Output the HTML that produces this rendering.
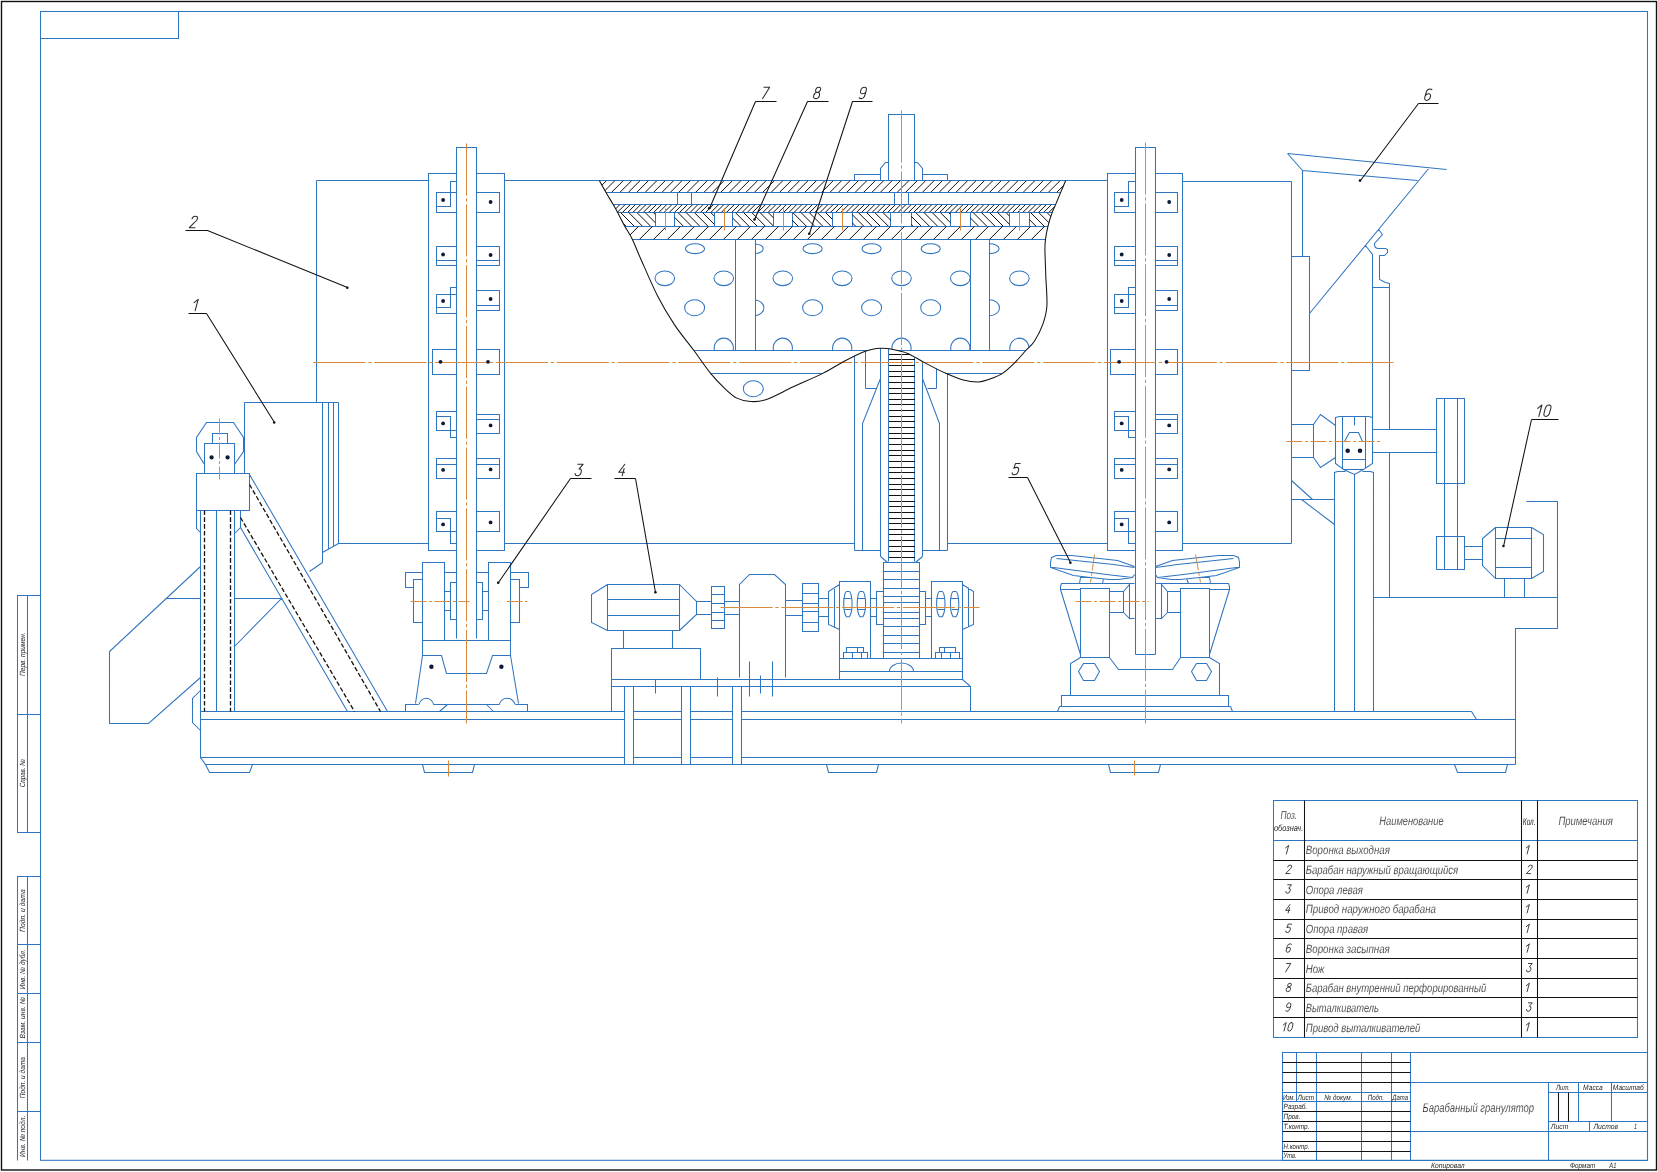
<!DOCTYPE html>
<html lang="ru"><head><meta charset="utf-8"><title>Барабанный гранулятор</title>
<style>html,body{margin:0;padding:0;background:#fff}svg{display:block}</style></head>
<body>
<svg width="1658" height="1172" viewBox="0 0 1658 1172">
<defs>
<clipPath id="cut"><path d="M599.3 180.5C600.4 182.5 603.7 188.4 606.0 192.4C608.3 196.4 611.3 201.3 613.2 204.6C615.1 207.9 615.7 208.8 617.6 212.4C619.5 216.0 622.3 221.7 624.8 226.2C627.3 230.7 629.8 234.0 632.4 239.4C635.0 244.8 636.5 249.4 640.7 258.8C644.9 268.2 652.0 285.0 657.6 296.0C663.2 307.0 668.4 315.5 674.4 324.6C680.4 333.7 687.8 342.3 693.9 350.5C700.0 358.7 705.6 367.2 710.8 373.6C716.0 380.0 720.8 384.7 725.1 388.8C729.5 392.9 732.7 396.0 736.9 398.1C741.1 400.2 745.6 401.2 750.4 401.5C755.2 401.8 758.5 402.2 765.6 399.8C772.7 397.4 783.3 391.5 792.7 387.1C802.1 382.7 813.8 377.8 822.2 373.6C830.6 369.4 836.7 365.3 843.3 361.8C849.9 358.3 856.9 354.6 862.0 352.5C867.1 350.4 870.6 349.6 873.8 348.9C877.0 348.2 878.2 348.3 881.0 348.3C883.8 348.3 886.3 348.2 890.7 349.1C895.1 350.0 902.0 351.1 907.6 353.4C913.2 355.6 917.9 359.2 924.4 362.6C930.9 366.0 939.9 370.7 946.4 373.6C952.9 376.5 957.9 378.6 963.3 380.0C968.6 381.4 974.3 382.1 978.5 382.0C982.7 381.9 984.7 380.9 988.6 379.5C992.5 378.1 997.6 376.6 1002.1 373.6C1006.6 370.7 1011.7 365.7 1015.6 361.8C1019.5 357.9 1022.7 353.9 1025.8 350.5C1028.9 347.1 1031.4 345.8 1034.2 341.5C1037.0 337.2 1040.6 330.5 1042.7 324.6C1044.8 318.7 1046.4 314.1 1046.9 306.0C1047.4 297.9 1046.1 285.0 1045.8 275.7C1045.5 266.4 1045.0 256.1 1044.9 250.0C1044.9 243.9 1045.0 243.4 1045.5 239.4C1046.0 235.4 1046.9 230.7 1048.0 226.2C1049.1 221.7 1050.9 216.0 1052.2 212.4C1053.5 208.8 1054.2 207.9 1055.6 204.6C1057.0 201.3 1059.0 196.4 1060.7 192.4C1062.4 188.4 1064.9 182.5 1065.7 180.5Z"/></clipPath>
<clipPath id="below"><path d="M590 800L590 170L599.3 180.5C600.4 182.5 603.7 188.4 606.0 192.4C608.3 196.4 611.3 201.3 613.2 204.6C615.1 207.9 615.7 208.8 617.6 212.4C619.5 216.0 622.3 221.7 624.8 226.2C627.3 230.7 629.8 234.0 632.4 239.4C635.0 244.8 636.5 249.4 640.7 258.8C644.9 268.2 652.0 285.0 657.6 296.0C663.2 307.0 668.4 315.5 674.4 324.6C680.4 333.7 687.8 342.3 693.9 350.5C700.0 358.7 705.6 367.2 710.8 373.6C716.0 380.0 720.8 384.7 725.1 388.8C729.5 392.9 732.7 396.0 736.9 398.1C741.1 400.2 745.6 401.2 750.4 401.5C755.2 401.8 758.5 402.2 765.6 399.8C772.7 397.4 783.3 391.5 792.7 387.1C802.1 382.7 813.8 377.8 822.2 373.6C830.6 369.4 836.7 365.3 843.3 361.8C849.9 358.3 856.9 354.6 862.0 352.5C867.1 350.4 870.6 349.6 873.8 348.9C877.0 348.2 878.2 348.3 881.0 348.3C883.8 348.3 886.3 348.2 890.7 349.1C895.1 350.0 902.0 351.1 907.6 353.4C913.2 355.6 917.9 359.2 924.4 362.6C930.9 366.0 939.9 370.7 946.4 373.6C952.9 376.5 957.9 378.6 963.3 380.0C968.6 381.4 974.3 382.1 978.5 382.0C982.7 381.9 984.7 380.9 988.6 379.5C992.5 378.1 997.6 376.6 1002.1 373.6C1006.6 370.7 1011.7 365.7 1015.6 361.8C1019.5 357.9 1022.7 353.9 1025.8 350.5C1028.9 347.1 1031.4 345.8 1034.2 341.5C1037.0 337.2 1040.6 330.5 1042.7 324.6C1044.8 318.7 1046.4 314.1 1046.9 306.0C1047.4 297.9 1046.1 285.0 1045.8 275.7C1045.5 266.4 1045.0 256.1 1044.9 250.0C1044.9 243.9 1045.0 243.4 1045.5 239.4C1046.0 235.4 1046.9 230.7 1048.0 226.2C1049.1 221.7 1050.9 216.0 1052.2 212.4C1053.5 208.8 1054.2 207.9 1055.6 204.6C1057.0 201.3 1059.0 196.4 1060.7 192.4C1062.4 188.4 1064.9 182.5 1065.7 180.5L1080 170L1080 800Z"/></clipPath>
<clipPath id="ly0"><rect x="590" y="180.5" width="490" height="11.9"/></clipPath>
<clipPath id="ly1"><rect x="590" y="192.4" width="490" height="12.2"/></clipPath>
<clipPath id="ly2"><rect x="590" y="204.6" width="490" height="7.8"/></clipPath>
<clipPath id="ly3"><rect x="590" y="212.4" width="490" height="13.8"/></clipPath>
<clipPath id="ly4"><rect x="590" y="226.2" width="490" height="13.3"/></clipPath>
<clipPath id="l4g"><path d="M590.0 212.4H655.2V226.2H590.0ZM674.6 212.4H714.3V226.2H674.6ZM732.8 212.4H773.4V226.2H732.8ZM792.0 212.4H832.4V226.2H792.0ZM852.1 212.4H890.9V226.2H852.1ZM911.2 212.4H950.4V226.2H911.2ZM970.0 212.4H1009.5V226.2H970.0ZM1029.4 212.4H1080.0V226.2H1029.4Z"/></clipPath>
</defs>
<rect width="1658" height="1172" fill="#fff"/>
<rect x="1.5" y="1.5" width="1655" height="1168.5" fill="none" stroke="#111" stroke-width="1.4"/>
<g fill="none" stroke="#3075c0" stroke-width="1.05">
<rect x="40.5" y="11.5" width="1607" height="1148.8"/>
<path d="M40.5 38.5L178.5 38.5L178.5 11.5M316.5 180.5L316.5 402.5M316.5 180.5L428.5 180.5M504.5 180.5L1107.5 180.5M1182.5 181.5L1291.5 181.5M1291.5 181.5L1291.5 543.5M338.5 543.5L428.5 543.5M504.5 543.5L854.5 543.5M947.5 543.5L1107.5 543.5M1182.5 543.5L1291.5 543.5M456.5 173.5L428.5 173.5L428.5 550.5L456.5 550.5M476.5 173.5L504.5 173.5L504.5 550.5L476.5 550.5M456.5 638.5L456.5 147.5L476.5 147.5L476.5 638.5M436.5 192.5L456.5 192.5L456.5 212.5L436.5 212.5ZM476.5 192.5L499.5 192.5L499.5 212.5L476.5 212.5ZM436.5 206.5L450.5 206.5L450.5 181.5L456.5 181.5M436.5 246.5L456.5 246.5L456.5 265.5L436.5 265.5ZM476.5 246.5L499.5 246.5L499.5 265.5L476.5 265.5ZM436.5 260.5L456.5 260.5M476.5 260.5L499.5 260.5M436.5 294.5L456.5 294.5L456.5 313.5L436.5 313.5ZM476.5 290.5L499.5 290.5L499.5 310.5L476.5 310.5ZM436.5 307.5L450.5 307.5L450.5 287.5L456.5 287.5M476.5 305.5L499.5 305.5M436.5 531.5L456.5 531.5L456.5 511.5L436.5 511.5ZM476.5 531.5L499.5 531.5L499.5 511.5L476.5 511.5ZM436.5 518.5L450.5 518.5L450.5 543.5L456.5 543.5M436.5 478.5L456.5 478.5L456.5 458.5L436.5 458.5ZM476.5 478.5L499.5 478.5L499.5 458.5L476.5 458.5ZM436.5 464.5L456.5 464.5M476.5 464.5L499.5 464.5M436.5 430.5L456.5 430.5L456.5 411.5L436.5 411.5ZM476.5 433.5L499.5 433.5L499.5 414.5L476.5 414.5ZM436.5 416.5L450.5 416.5L450.5 437.5L456.5 437.5M476.5 419.5L499.5 419.5M432.5 349.5L456.5 349.5L456.5 374.5L432.5 374.5ZM476.5 349.5L499.5 349.5L499.5 374.5L476.5 374.5ZM1135.5 173.5L1107.5 173.5L1107.5 550.5L1135.5 550.5M1155.5 173.5L1182.5 173.5L1182.5 550.5L1155.5 550.5M1135.5 654.5L1135.5 147.5L1155.5 147.5L1155.5 654.5M1114.5 192.5L1135.5 192.5L1135.5 212.5L1114.5 212.5ZM1155.5 192.5L1177.5 192.5L1177.5 212.5L1155.5 212.5ZM1114.5 206.5L1128.5 206.5L1128.5 181.5L1135.5 181.5M1114.5 246.5L1135.5 246.5L1135.5 265.5L1114.5 265.5ZM1155.5 246.5L1177.5 246.5L1177.5 265.5L1155.5 265.5ZM1114.5 260.5L1135.5 260.5M1155.5 260.5L1177.5 260.5M1114.5 294.5L1135.5 294.5L1135.5 313.5L1114.5 313.5ZM1155.5 290.5L1177.5 290.5L1177.5 310.5L1155.5 310.5ZM1114.5 307.5L1128.5 307.5L1128.5 287.5L1135.5 287.5M1155.5 305.5L1177.5 305.5M1114.5 531.5L1135.5 531.5L1135.5 511.5L1114.5 511.5ZM1155.5 531.5L1177.5 531.5L1177.5 511.5L1155.5 511.5ZM1114.5 518.5L1128.5 518.5L1128.5 543.5L1135.5 543.5M1114.5 478.5L1135.5 478.5L1135.5 458.5L1114.5 458.5ZM1155.5 478.5L1177.5 478.5L1177.5 458.5L1155.5 458.5ZM1114.5 464.5L1135.5 464.5M1155.5 464.5L1177.5 464.5M1114.5 430.5L1135.5 430.5L1135.5 411.5L1114.5 411.5ZM1155.5 433.5L1177.5 433.5L1177.5 414.5L1155.5 414.5ZM1114.5 416.5L1128.5 416.5L1128.5 437.5L1135.5 437.5M1155.5 419.5L1177.5 419.5M1110.5 349.5L1135.5 349.5L1135.5 374.5L1110.5 374.5ZM1155.5 349.5L1177.5 349.5L1177.5 374.5L1155.5 374.5ZM888.5 180.5L888.5 114.5L914.5 114.5L914.5 180.5M880.5 180.5L880.5 168.5L885.5 162.5L888.5 162.5M922.5 180.5L922.5 168.5L917.5 162.5L914.5 162.5M854.5 180.5L854.5 174.5L880.5 174.5M947.5 180.5L947.5 174.5L922.5 174.5M854.5 550.5L880.5 550.5M922.5 550.5L947.5 550.5M880.5 556.5L887.5 562.5M922.5 556.5L915.5 562.5M883.5 562.5L919.5 562.5L919.5 658.5L883.5 658.5ZM883.5 571.5L919.5 571.5M883.5 579.5L919.5 579.5M883.5 588.5L919.5 588.5M883.5 596.5L919.5 596.5M883.5 602.5L919.5 602.5M883.5 612.5L919.5 612.5M883.5 618.5L919.5 618.5M883.5 626.5L919.5 626.5M883.5 635.5L919.5 635.5M883.5 643.5L919.5 643.5M883.5 652.5L919.5 652.5M607.5 584.5L679.5 584.5L679.5 630.5L607.5 630.5ZM607.5 599.5L679.5 599.5M607.5 615.5L679.5 615.5M607.5 584.5L591.5 594.5L591.5 622.5L607.5 630.5M679.5 584.5L696.5 601.5L696.5 614.5L679.5 630.5M696.5 601.5L711.5 601.5M696.5 614.5L711.5 614.5M711.5 586.5L724.5 586.5L724.5 628.5L711.5 628.5ZM711.5 594.5L724.5 594.5M711.5 603.5L724.5 603.5M711.5 612.5L724.5 612.5M711.5 620.5L724.5 620.5M724.5 601.5L739.5 601.5M724.5 614.5L739.5 614.5M739.5 677.5L739.5 584.5L749.5 574.5L774.5 574.5L785.5 584.5L785.5 677.5M785.5 600.5L802.5 600.5M785.5 615.5L802.5 615.5M802.5 583.5L818.5 583.5L818.5 631.5L802.5 631.5ZM802.5 593.5L818.5 593.5M802.5 603.5L818.5 603.5M802.5 611.5L818.5 611.5M802.5 622.5L818.5 622.5M818.5 598.5L828.5 598.5M818.5 616.5L828.5 616.5M839.5 584.5L828.5 591.5L828.5 624.5L839.5 629.5M834.5 587.5L834.5 627.5M839.5 581.5L870.5 581.5L870.5 658.5L839.5 658.5ZM931.5 581.5L962.5 581.5L962.5 658.5L931.5 658.5ZM843.5 598.5L851.5 598.5M844.5 609.5L851.5 609.5M857.5 598.5L865.5 598.5M857.5 609.5L865.5 609.5M936.5 598.5L944.5 598.5M937.5 609.5L944.5 609.5M950.5 598.5L958.5 598.5M951.5 609.5L958.5 609.5M870.5 598.5L876.5 598.5M870.5 616.5L876.5 616.5M876.5 591.5L883.5 591.5L883.5 624.5L876.5 624.5ZM919.5 591.5L925.5 591.5L925.5 624.5L919.5 624.5ZM925.5 598.5L931.5 598.5M925.5 616.5L931.5 616.5M962.5 584.5L973.5 591.5L973.5 624.5L962.5 629.5M968.5 587.5L968.5 627.5M843.5 652.5L867.5 652.5L867.5 658.5L843.5 658.5ZM852.5 652.5L852.5 658.5M861.5 652.5L861.5 658.5M846.5 652.5L846.5 647.5L863.5 647.5L863.5 652.5M857.5 647.5L857.5 652.5M935.5 652.5L959.5 652.5L959.5 658.5L935.5 658.5ZM941.5 652.5L941.5 658.5M950.5 652.5L950.5 658.5M939.5 652.5L939.5 647.5L955.5 647.5L955.5 652.5M944.5 647.5L944.5 652.5M839.5 658.5L839.5 679.5M839.5 671.5L962.5 671.5M870.5 658.5L931.5 658.5M962.5 658.5L962.5 679.5L970.5 686.5L970.5 711.5M623.5 630.5L672.5 630.5L672.5 648.5L623.5 648.5ZM611.5 711.5L611.5 648.5L700.5 648.5L700.5 679.5M611.5 679.5L962.5 679.5M611.5 686.5L970.5 686.5M624.5 686.5L624.5 764.5M633.5 686.5L633.5 764.5M681.5 686.5L681.5 764.5M690.5 686.5L690.5 764.5M732.5 686.5L732.5 764.5M741.5 686.5L741.5 764.5M655.5 679.5L655.5 693.5M717.5 677.5L717.5 696.5M749.5 661.5L749.5 696.5M760.5 675.5L760.5 693.5M772.5 661.5L772.5 696.5M200.5 711.5L624.5 711.5M633.5 711.5L681.5 711.5M690.5 711.5L732.5 711.5M741.5 711.5L1471.5 711.5M200.5 719.5L624.5 719.5M633.5 719.5L681.5 719.5M690.5 719.5L732.5 719.5M741.5 719.5L1515.5 719.5M200.5 757.5L624.5 757.5M633.5 757.5L681.5 757.5M690.5 757.5L732.5 757.5M741.5 757.5L1515.5 757.5M205.5 764.5L1515.5 764.5M200.5 711.5L200.5 757.5L205.5 764.5M1471.5 711.5L1476.5 719.5M205.5 764.5L209.5 772.5L249.5 772.5L252.5 764.5M422.5 764.5L424.5 772.5L472.5 772.5L474.5 764.5M826.5 764.5L828.5 772.5L876.5 772.5L878.5 764.5M1108.5 764.5L1110.5 772.5L1158.5 772.5L1160.5 764.5M1454.5 764.5L1457.5 772.5L1505.5 772.5L1507.5 764.5M200.5 510.5L200.5 711.5M216.5 510.5L216.5 711.5M234.5 510.5L234.5 711.5M196.5 473.5L249.5 473.5L249.5 510.5L196.5 510.5ZM196.5 510.5L196.5 528.5L200.5 532.5M240.5 510.5L240.5 527.5L234.5 533.5M204.5 464.5L196.5 451.5L196.5 437.5L206.5 422.5L233.5 422.5L243.5 437.5L243.5 451.5L234.5 464.5M204.5 473.5L204.5 443.5L234.5 443.5L234.5 473.5M212.5 443.5L212.5 433.5L227.5 433.5L227.5 443.5M200.5 566.5L109.5 651.5L109.5 723.5L148.5 723.5L200.5 677.5M165.5 598.5L200.5 598.5M200.5 690.5L192.5 698.5L192.5 722.5L200.5 730.5M234.5 598.5L281.5 598.5L234.5 646.5M249.5 474.5L387.5 711.5M240.5 527.5L347.5 711.5M244.5 402.5L338.5 402.5M244.5 402.5L244.5 473.5M322.5 402.5L322.5 562.5M328.5 402.5L328.5 549.5M333.5 402.5L333.5 546.5M338.5 402.5L338.5 543.5M322.5 552.5L338.5 543.5M322.5 562.5L309.5 571.5M422.5 562.5L444.5 562.5L444.5 640.5L422.5 640.5ZM488.5 562.5L510.5 562.5L510.5 640.5L488.5 640.5ZM444.5 640.5L488.5 640.5M422.5 572.5L405.5 572.5L405.5 587.5L413.5 587.5M422.5 579.5L413.5 579.5L413.5 622.5L422.5 622.5M510.5 572.5L528.5 572.5L528.5 587.5L519.5 587.5M510.5 579.5L519.5 579.5L519.5 622.5L510.5 622.5M444.5 572.5L456.5 572.5M476.5 572.5L488.5 572.5M456.5 582.5L450.5 582.5L450.5 619.5L456.5 619.5M476.5 582.5L482.5 582.5L482.5 619.5L476.5 619.5M444.5 591.5L450.5 591.5M444.5 610.5L450.5 610.5M482.5 591.5L488.5 591.5M482.5 610.5L488.5 610.5M422.5 640.5L422.5 655.5L441.5 655.5L446.5 673.5L486.5 673.5L492.5 655.5L510.5 655.5L510.5 640.5M422.5 655.5L415.5 703.5M510.5 655.5L518.5 703.5M405.5 711.5L405.5 704.5L418.5 704.5M433.5 704.5L499.5 704.5M515.5 704.5L527.5 704.5L527.5 711.5M447.5 704.5L439.5 711.5M486.5 704.5L493.5 711.5M1134.5 566.5L1117.5 560.5L1099.5 558.5L1071.5 555.5L1056.5 555.5L1051.5 557.5L1050.5 562.5L1050.5 567.5L1073.5 575.5L1090.5 577.5L1109.5 579.5L1118.5 579.5L1132.5 577.5L1134.5 574.5M1155.5 566.5L1172.5 560.5L1190.5 558.5L1218.5 555.5L1233.5 555.5L1238.5 557.5L1239.5 562.5L1239.5 567.5L1216.5 575.5L1199.5 577.5L1180.5 579.5L1171.5 579.5L1157.5 577.5L1155.5 574.5M1056.5 558.5L1113.5 564.5L1134.5 567.5M1233.5 558.5L1177.5 564.5L1155.5 567.5M1051.5 567.5L1053.5 567.5L1106.5 574.5L1132.5 577.5M1239.5 567.5L1236.5 567.5L1183.5 574.5L1157.5 577.5M1079.5 583.5L1080.5 577.5L1089.5 577.5M1210.5 583.5L1209.5 577.5L1201.5 577.5M1102.5 583.5L1103.5 578.5M1188.5 583.5L1186.5 578.5M1134.5 583.5L1061.5 583.5L1060.5 586.5L1060.5 589.5L1080.5 589.5M1155.5 583.5L1228.5 583.5L1229.5 586.5L1229.5 589.5L1209.5 589.5M1060.5 589.5L1080.5 654.5M1229.5 589.5L1209.5 654.5M1080.5 588.5L1109.5 588.5L1109.5 657.5L1080.5 657.5ZM1209.5 588.5L1180.5 588.5L1180.5 657.5L1209.5 657.5ZM1109.5 591.5L1123.5 591.5L1123.5 612.5L1109.5 612.5M1180.5 591.5L1167.5 591.5L1167.5 612.5L1180.5 612.5M1123.5 591.5L1129.5 584.5L1129.5 618.5L1123.5 612.5M1167.5 591.5L1161.5 584.5L1161.5 618.5L1167.5 612.5M1129.5 618.5L1134.5 618.5M1161.5 618.5L1155.5 618.5M1135.5 654.5L1155.5 654.5M1080.5 657.5L1070.5 663.5L1070.5 695.5M1209.5 657.5L1219.5 663.5L1219.5 695.5M1109.5 657.5L1118.5 669.5L1172.5 669.5L1180.5 657.5M1099.5 671.5L1094.5 680.5L1083.5 680.5L1078.5 671.5L1083.5 663.5L1094.5 663.5ZM1211.5 671.5L1206.5 680.5L1196.5 680.5L1191.5 671.5L1196.5 663.5L1206.5 663.5ZM1061.5 695.5L1228.5 695.5L1228.5 706.5L1061.5 706.5ZM1059.5 706.5L1057.5 711.5M1230.5 706.5L1232.5 711.5M1059.5 706.5L1230.5 706.5M1287.5 153.5L1446.5 169.5M1287.5 153.5L1302.5 170.5M1302.5 170.5L1417.5 180.5M1302.5 170.5L1302.5 256.5M1429.5 167.5L1309.5 313.5M1291.5 256.5L1309.5 256.5L1309.5 370.5L1291.5 370.5ZM1378.5 229.5L1382.5 234.5L1374.5 243.5L1374.5 245.5L1375.5 247.5L1377.5 248.5L1385.5 248.5L1387.5 249.5L1387.5 252.5L1384.5 255.5L1379.5 255.5L1379.5 279.5L1385.5 282.5L1389.5 283.5L1389.5 429.5M1365.5 245.5L1372.5 254.5L1372.5 417.5M1372.5 287.5L1389.5 287.5M1389.5 452.5L1389.5 597.5M1291.5 424.5L1313.5 424.5L1313.5 457.5L1291.5 457.5M1313.5 424.5L1320.5 414.5L1335.5 425.5M1313.5 457.5L1320.5 467.5L1335.5 457.5M1335.5 417.5L1339.5 416.5L1368.5 416.5L1372.5 417.5L1372.5 463.5L1363.5 469.5L1343.5 469.5L1335.5 463.5ZM1342.5 416.5L1342.5 468.5M1365.5 416.5L1365.5 468.5M1354.5 416.5L1354.5 425.5M1342.5 459.5L1365.5 459.5M1344.5 441.5L1349.5 432.5L1358.5 432.5L1362.5 441.5M1343.5 469.5L1354.5 474.5L1363.5 469.5M1334.5 711.5L1334.5 472.5L1337.5 471.5L1345.5 471.5M1373.5 711.5L1373.5 472.5L1370.5 471.5L1362.5 471.5M1354.5 474.5L1354.5 711.5M1372.5 429.5L1436.5 429.5M1372.5 452.5L1436.5 452.5M1436.5 398.5L1464.5 398.5L1464.5 483.5L1436.5 483.5ZM1436.5 536.5L1464.5 536.5L1464.5 569.5L1436.5 569.5ZM1444.5 398.5L1444.5 569.5M1457.5 398.5L1457.5 569.5M1464.5 546.5L1482.5 546.5M1464.5 559.5L1482.5 559.5M1495.5 527.5L1482.5 538.5L1482.5 565.5L1495.5 578.5M1495.5 527.5L1531.5 527.5L1531.5 578.5L1495.5 578.5ZM1495.5 538.5L1531.5 538.5M1495.5 567.5L1531.5 567.5M1531.5 527.5L1543.5 534.5L1543.5 571.5L1531.5 578.5M1504.5 578.5L1504.5 597.5M1524.5 578.5L1524.5 597.5M1373.5 597.5L1557.5 597.5M1526.5 501.5L1557.5 501.5L1557.5 628.5L1515.5 628.5L1515.5 764.5M1291.5 499.5L1334.5 499.5M1291.5 480.5L1312.5 499.5M1301.5 499.5L1334.5 524.5"/>
<path d="M40.5 595.5L17.5 595.5L17.5 832.5L40.5 832.5M27.5 595.5L27.5 832.5M17.5 714.5L40.5 714.5M40.5 876.5L17.5 876.5L17.5 1160.5M27.5 876.5L27.5 1160.5M17.5 944.5L40.5 944.5M17.5 993.5L40.5 993.5M17.5 1042.5L40.5 1042.5M17.5 1111.5L40.5 1111.5"/>
<path d="M1273.5 800.5L1637.5 800.5L1637.5 1037.5L1273.5 1037.5ZM1273.5 840.5L1637.5 840.5M1282.5 1052.5L1647.5 1052.5L1647.5 1160.5L1282.5 1160.5ZM1316.5 1052.5L1316.5 1160.5M1361.5 1052.5L1361.5 1160.5M1391.5 1052.5L1391.5 1160.5M1410.5 1052.5L1410.5 1160.5M1296.5 1052.5L1296.5 1101.5M1282.5 1092.5L1410.5 1092.5M1282.5 1101.5L1410.5 1101.5M1410.5 1082.5L1647.5 1082.5M1410.5 1131.5L1647.5 1131.5M1548.5 1082.5L1548.5 1160.5M1548.5 1092.5L1647.5 1092.5M1548.5 1121.5L1647.5 1121.5M1578.5 1082.5L1578.5 1121.5M1611.5 1082.5L1611.5 1121.5M1589.5 1121.5L1589.5 1131.5"/>
<path d="M846.7 591.5C844.9 591.5 843.7 598.3 843.7 604.3C843.7 610.3 844.9 614.4 846.4 616.8L849.4 616.8C850.9 614.4 852.1 610.3 852.1 604.3C852.1 598.3 850.9 591.5 849.1 591.5Z"/><path d="M860.2 591.5C858.4 591.5 857.2 598.3 857.2 604.3C857.2 610.3 858.4 614.4 859.9 616.8L862.9 616.8C864.4 614.4 865.6 610.3 865.6 604.3C865.6 598.3 864.4 591.5 862.6 591.5Z"/><path d="M939.6 591.5C937.8 591.5 936.6 598.3 936.6 604.3C936.6 610.3 937.8 614.4 939.3 616.8L942.3 616.8C943.8 614.4 945.0 610.3 945.0 604.3C945.0 598.3 943.8 591.5 942.0 591.5Z"/><path d="M953.4 591.5C951.6 591.5 950.4 598.3 950.4 604.3C950.4 610.3 951.6 614.4 953.1 616.8L956.1 616.8C957.6 614.4 958.8 610.3 958.8 604.3C958.8 598.3 957.6 591.5 955.8 591.5Z"/><path d="M889.4 671.5A12 8.4 0 0 1 913.5 671.5"/><path d="M418.8 704.6C420.5 700 423 698.3 426.2 698.3C429.5 698.3 432 700 433.9 704.6"/><path d="M499 704.6C500.8 700 503.5 698.3 507.3 698.3C510.5 698.3 513.2 700 515.3 704.6"/>
<g clip-path="url(#below)"><path d="M854.5 340.5L854.5 550.5M880.5 340.5L880.5 556.5M888.5 340.5L888.5 561.5M914.5 340.5L914.5 561.5M922.5 340.5L922.5 556.5M947.5 340.5L947.5 550.5M865.5 340.5L865.5 388.5M865.5 388.5L876.5 388.5M936.5 340.5L936.5 388.5M936.5 388.5L927.5 388.5M880.5 378.5L862.5 423.5L862.5 550.5M922.5 378.5L939.5 423.5L939.5 550.5"/></g>
<g clip-path="url(#cut)"><path d="M590.5 192.5L1080.5 192.5M590.5 204.5L1080.5 204.5M590.5 212.5L1080.5 212.5M590.5 226.5L1080.5 226.5M590.5 239.5L1080.5 239.5M677.5 192.5L677.5 204.5M691.5 192.5L691.5 204.5M894.5 192.5L894.5 204.5M908.5 192.5L908.5 204.5M655.5 212.5L655.5 226.5M674.5 212.5L674.5 226.5M714.5 212.5L714.5 226.5M732.5 212.5L732.5 226.5M773.5 212.5L773.5 226.5M792.5 212.5L792.5 226.5M832.5 212.5L832.5 226.5M852.5 212.5L852.5 226.5M890.5 212.5L890.5 226.5M911.5 212.5L911.5 226.5M950.5 212.5L950.5 226.5M970.5 212.5L970.5 226.5M1009.5 212.5L1009.5 226.5M1029.5 212.5L1029.5 226.5M735.5 239.5L735.5 350.5M755.5 239.5L755.5 350.5M970.5 239.5L970.5 350.5M989.5 239.5L989.5 350.5M680.5 350.5L1040.5 350.5M700.5 373.5L1010.5 373.5"/><ellipse cx="695.0" cy="248.7" rx="9.6" ry="4.9"/><ellipse cx="812.6" cy="248.7" rx="9.6" ry="4.9"/><ellipse cx="871.6" cy="248.7" rx="9.6" ry="4.9"/><ellipse cx="930.7" cy="248.7" rx="9.6" ry="4.9"/><ellipse cx="664.8" cy="278.3" rx="9.8" ry="7.3"/><ellipse cx="723.8" cy="278.3" rx="9.8" ry="7.3"/><ellipse cx="782.8" cy="278.3" rx="9.8" ry="7.3"/><ellipse cx="842.2" cy="278.3" rx="9.8" ry="7.3"/><ellipse cx="901.5" cy="278.3" rx="9.8" ry="7.3"/><ellipse cx="960.3" cy="278.3" rx="9.8" ry="7.3"/><ellipse cx="1019.4" cy="278.3" rx="9.8" ry="7.3"/><ellipse cx="694.6" cy="307.8" rx="10.0" ry="8.0"/><ellipse cx="812.6" cy="307.8" rx="10.0" ry="8.0"/><ellipse cx="871.6" cy="307.8" rx="10.0" ry="8.0"/><ellipse cx="930.7" cy="307.8" rx="10.0" ry="8.0"/><ellipse cx="753.3" cy="388.8" rx="10.0" ry="8.0"/><path d="M755.5 243.9A9.6 4.9 0 0 1 755.5 253.5"/><path d="M755.5 299.9A10.0 8.0 0 0 1 755.5 315.7"/><path d="M989.5 243.8A9.6 4.9 0 0 1 989.5 253.6"/><path d="M989.5 299.8A10.0 8.0 0 0 1 989.5 315.8"/><path d="M714.4 350.5A9.6 10.3 0 1 1 733.2 350.5"/><path d="M773.4 350.5A9.6 10.3 0 1 1 792.2 350.5"/><path d="M832.8 350.5A9.6 10.3 0 1 1 851.6 350.5"/><path d="M892.1 350.5A9.6 10.3 0 1 1 910.9 350.5"/><path d="M950.9 350.5A9.6 10.3 0 1 1 969.7 350.5"/><path d="M1010.0 350.5A9.6 10.3 0 1 1 1028.8 350.5"/></g>
</g>
<g fill="none" stroke="#111" stroke-width="1" clip-path="url(#cut)">
<g clip-path="url(#ly0)"><path d="M577.9 192.4L589.8 180.5M586.3 192.4L598.2 180.5M594.7 192.4L606.6 180.5M603.1 192.4L615.0 180.5M611.5 192.4L623.4 180.5M619.9 192.4L631.8 180.5M628.3 192.4L640.2 180.5M636.7 192.4L648.6 180.5M645.1 192.4L657.0 180.5M653.5 192.4L665.4 180.5M661.9 192.4L673.8 180.5M670.3 192.4L682.2 180.5M678.7 192.4L690.6 180.5M687.1 192.4L699.0 180.5M695.5 192.4L707.4 180.5M703.9 192.4L715.8 180.5M712.3 192.4L724.2 180.5M720.7 192.4L732.6 180.5M729.1 192.4L741.0 180.5M737.5 192.4L749.4 180.5M745.9 192.4L757.8 180.5M754.3 192.4L766.2 180.5M762.7 192.4L774.6 180.5M771.1 192.4L783.0 180.5M779.5 192.4L791.4 180.5M787.9 192.4L799.8 180.5M796.3 192.4L808.2 180.5M804.7 192.4L816.6 180.5M813.1 192.4L825.0 180.5M821.5 192.4L833.4 180.5M829.9 192.4L841.8 180.5M838.3 192.4L850.2 180.5M846.7 192.4L858.6 180.5M855.1 192.4L867.0 180.5M863.5 192.4L875.4 180.5M871.9 192.4L883.8 180.5M880.3 192.4L892.2 180.5M888.7 192.4L900.6 180.5M897.1 192.4L909.0 180.5M905.5 192.4L917.4 180.5M913.9 192.4L925.8 180.5M922.3 192.4L934.2 180.5M930.7 192.4L942.6 180.5M939.1 192.4L951.0 180.5M947.5 192.4L959.4 180.5M955.9 192.4L967.8 180.5M964.3 192.4L976.2 180.5M972.7 192.4L984.6 180.5M981.1 192.4L993.0 180.5M989.5 192.4L1001.4 180.5M997.9 192.4L1009.8 180.5M1006.3 192.4L1018.2 180.5M1014.7 192.4L1026.6 180.5M1023.1 192.4L1035.0 180.5M1031.5 192.4L1043.4 180.5M1039.9 192.4L1051.8 180.5M1048.3 192.4L1060.2 180.5M1056.7 192.4L1068.6 180.5M1065.1 192.4L1077.0 180.5M1073.5 192.4L1085.4 180.5M1081.9 192.4L1093.8 180.5M1090.3 192.4L1102.2 180.5M1098.7 192.4L1110.6 180.5"/></g>
<g clip-path="url(#ly2)"><path d="M580.9 212.4L588.7 204.6M586.1 212.4L593.9 204.6M591.3 212.4L599.1 204.6M596.5 212.4L604.3 204.6M601.7 212.4L609.5 204.6M606.9 212.4L614.7 204.6M612.1 212.4L619.9 204.6M617.3 212.4L625.1 204.6M622.5 212.4L630.3 204.6M627.7 212.4L635.5 204.6M632.9 212.4L640.7 204.6M638.1 212.4L645.9 204.6M643.3 212.4L651.1 204.6M648.5 212.4L656.3 204.6M653.7 212.4L661.5 204.6M658.9 212.4L666.7 204.6M664.1 212.4L671.9 204.6M669.3 212.4L677.1 204.6M674.5 212.4L682.3 204.6M679.7 212.4L687.5 204.6M684.9 212.4L692.7 204.6M690.1 212.4L697.9 204.6M695.3 212.4L703.1 204.6M700.5 212.4L708.3 204.6M705.7 212.4L713.5 204.6M710.9 212.4L718.7 204.6M716.1 212.4L723.9 204.6M721.3 212.4L729.1 204.6M726.5 212.4L734.3 204.6M731.7 212.4L739.5 204.6M736.9 212.4L744.7 204.6M742.1 212.4L749.9 204.6M747.3 212.4L755.1 204.6M752.5 212.4L760.3 204.6M757.7 212.4L765.5 204.6M762.9 212.4L770.7 204.6M768.1 212.4L775.9 204.6M773.3 212.4L781.1 204.6M778.5 212.4L786.3 204.6M783.7 212.4L791.5 204.6M788.9 212.4L796.7 204.6M794.1 212.4L801.9 204.6M799.3 212.4L807.1 204.6M804.5 212.4L812.3 204.6M809.7 212.4L817.5 204.6M814.9 212.4L822.7 204.6M820.1 212.4L827.9 204.6M825.3 212.4L833.1 204.6M830.5 212.4L838.3 204.6M835.7 212.4L843.5 204.6M840.9 212.4L848.7 204.6M846.1 212.4L853.9 204.6M851.3 212.4L859.1 204.6M856.5 212.4L864.3 204.6M861.7 212.4L869.5 204.6M866.9 212.4L874.7 204.6M872.1 212.4L879.9 204.6M877.3 212.4L885.1 204.6M882.5 212.4L890.3 204.6M887.7 212.4L895.5 204.6M892.9 212.4L900.7 204.6M898.1 212.4L905.9 204.6M903.3 212.4L911.1 204.6M908.5 212.4L916.3 204.6M913.7 212.4L921.5 204.6M918.9 212.4L926.7 204.6M924.1 212.4L931.9 204.6M929.3 212.4L937.1 204.6M934.5 212.4L942.3 204.6M939.7 212.4L947.5 204.6M944.9 212.4L952.7 204.6M950.1 212.4L957.9 204.6M955.3 212.4L963.1 204.6M960.5 212.4L968.3 204.6M965.7 212.4L973.5 204.6M970.9 212.4L978.7 204.6M976.1 212.4L983.9 204.6M981.3 212.4L989.1 204.6M986.5 212.4L994.3 204.6M991.7 212.4L999.5 204.6M996.9 212.4L1004.7 204.6M1002.1 212.4L1009.9 204.6M1007.3 212.4L1015.1 204.6M1012.5 212.4L1020.3 204.6M1017.7 212.4L1025.5 204.6M1022.9 212.4L1030.7 204.6M1028.1 212.4L1035.9 204.6M1033.3 212.4L1041.1 204.6M1038.5 212.4L1046.3 204.6M1043.7 212.4L1051.5 204.6M1048.9 212.4L1056.7 204.6M1054.1 212.4L1061.9 204.6M1059.3 212.4L1067.1 204.6M1064.5 212.4L1072.3 204.6M1069.7 212.4L1077.5 204.6M1074.9 212.4L1082.7 204.6M1080.1 212.4L1087.9 204.6M1085.3 212.4L1093.1 204.6M1090.5 212.4L1098.3 204.6"/></g>
<g clip-path="url(#l4g)"><path d="M554.8 212.4L568.6 226.2M563.0 212.4L576.8 226.2M571.2 212.4L585.0 226.2M579.4 212.4L593.2 226.2M587.6 212.4L601.4 226.2M595.8 212.4L609.6 226.2M604.0 212.4L617.8 226.2M612.2 212.4L626.0 226.2M620.4 212.4L634.2 226.2M628.6 212.4L642.4 226.2M636.8 212.4L650.6 226.2M645.0 212.4L658.8 226.2M653.2 212.4L667.0 226.2M661.4 212.4L675.2 226.2M669.6 212.4L683.4 226.2M677.8 212.4L691.6 226.2M686.0 212.4L699.8 226.2M694.2 212.4L708.0 226.2M702.4 212.4L716.2 226.2M710.6 212.4L724.4 226.2M718.8 212.4L732.6 226.2M727.0 212.4L740.8 226.2M735.2 212.4L749.0 226.2M743.4 212.4L757.2 226.2M751.6 212.4L765.4 226.2M759.8 212.4L773.6 226.2M768.0 212.4L781.8 226.2M776.2 212.4L790.0 226.2M784.4 212.4L798.2 226.2M792.6 212.4L806.4 226.2M800.8 212.4L814.6 226.2M809.0 212.4L822.8 226.2M817.2 212.4L831.0 226.2M825.4 212.4L839.2 226.2M833.6 212.4L847.4 226.2M841.8 212.4L855.6 226.2M850.0 212.4L863.8 226.2M858.2 212.4L872.0 226.2M866.4 212.4L880.2 226.2M874.6 212.4L888.4 226.2M882.8 212.4L896.6 226.2M891.0 212.4L904.8 226.2M899.2 212.4L913.0 226.2M907.4 212.4L921.2 226.2M915.6 212.4L929.4 226.2M923.8 212.4L937.6 226.2M932.0 212.4L945.8 226.2M940.2 212.4L954.0 226.2M948.4 212.4L962.2 226.2M956.6 212.4L970.4 226.2M964.8 212.4L978.6 226.2M973.0 212.4L986.8 226.2M981.2 212.4L995.0 226.2M989.4 212.4L1003.2 226.2M997.6 212.4L1011.4 226.2M1005.8 212.4L1019.6 226.2M1014.0 212.4L1027.8 226.2M1022.2 212.4L1036.0 226.2M1030.4 212.4L1044.2 226.2M1038.6 212.4L1052.4 226.2M1046.8 212.4L1060.6 226.2M1055.0 212.4L1068.8 226.2M1063.2 212.4L1077.0 226.2M1071.4 212.4L1085.2 226.2M1079.6 212.4L1093.4 226.2M1087.8 212.4L1101.6 226.2"/></g>
<g clip-path="url(#ly4)"><path d="M569.4 239.5L582.7 226.2M583.4 239.5L596.7 226.2M597.4 239.5L610.7 226.2M611.4 239.5L624.7 226.2M625.4 239.5L638.7 226.2M639.4 239.5L652.7 226.2M653.4 239.5L666.7 226.2M667.4 239.5L680.7 226.2M681.4 239.5L694.7 226.2M695.4 239.5L708.7 226.2M709.4 239.5L722.7 226.2M723.4 239.5L736.7 226.2M737.4 239.5L750.7 226.2M751.4 239.5L764.7 226.2M765.4 239.5L778.7 226.2M779.4 239.5L792.7 226.2M793.4 239.5L806.7 226.2M807.4 239.5L820.7 226.2M821.4 239.5L834.7 226.2M835.4 239.5L848.7 226.2M849.4 239.5L862.7 226.2M863.4 239.5L876.7 226.2M877.4 239.5L890.7 226.2M891.4 239.5L904.7 226.2M905.4 239.5L918.7 226.2M919.4 239.5L932.7 226.2M933.4 239.5L946.7 226.2M947.4 239.5L960.7 226.2M961.4 239.5L974.7 226.2M975.4 239.5L988.7 226.2M989.4 239.5L1002.7 226.2M1003.4 239.5L1016.7 226.2M1017.4 239.5L1030.7 226.2M1031.4 239.5L1044.7 226.2M1045.4 239.5L1058.7 226.2M1059.4 239.5L1072.7 226.2M1073.4 239.5L1086.7 226.2M1087.4 239.5L1100.7 226.2M1101.4 239.5L1114.7 226.2"/></g>
</g>
<g fill="none" stroke="#111" stroke-width="1" shape-rendering="crispEdges" clip-path="url(#below)"><path d="M888.5 557.60L914.5 557.60M888.5 551.95L914.5 551.95M888.5 546.29L914.5 546.29M888.5 540.64L914.5 540.64M888.5 534.99L914.5 534.99M888.5 529.33L914.5 529.33M888.5 523.68L914.5 523.68M888.5 518.03L914.5 518.03M888.5 512.38L914.5 512.38M888.5 506.72L914.5 506.72M888.5 501.07L914.5 501.07M888.5 495.42L914.5 495.42M888.5 489.76L914.5 489.76M888.5 484.11L914.5 484.11M888.5 478.46L914.5 478.46M888.5 472.80L914.5 472.80M888.5 467.15L914.5 467.15M888.5 461.50L914.5 461.50M888.5 455.85L914.5 455.85M888.5 450.19L914.5 450.19M888.5 444.54L914.5 444.54M888.5 438.89L914.5 438.89M888.5 433.23L914.5 433.23M888.5 427.58L914.5 427.58M888.5 421.93L914.5 421.93M888.5 416.27L914.5 416.27M888.5 410.62L914.5 410.62M888.5 404.97L914.5 404.97M888.5 399.32L914.5 399.32M888.5 393.66L914.5 393.66M888.5 388.01L914.5 388.01M888.5 382.36L914.5 382.36M888.5 376.70L914.5 376.70M888.5 371.05L914.5 371.05M888.5 365.40L914.5 365.40M888.5 359.74L914.5 359.74M888.5 354.09L914.5 354.09M888.5 348.44L914.5 348.44"/></g>
<g fill="none" stroke="#d98a3c" stroke-width="1">
<path d="M313.5 362.5L1393.5 362.5M466.5 143.5L466.5 723.5M901.5 110.5L901.5 723.5M1145.5 142.5L1145.5 723.5M720.5 607.5L979.5 607.5" stroke-dasharray="52.1 2.7 3.3 2.7"/>
<path d="M410.5 601.5L469.5 601.5M506.5 601.5L527.5 601.5M1075.5 601.5L1148.5 601.5M1286.5 441.5L1382.5 441.5M219.5 418.5L219.5 479.5M1094.5 554.5L1090.5 582.5M1195.5 554.5L1200.5 582.5" stroke-dasharray="16 2.5 3 2.5"/>
<path d="M448.5 760.5L448.5 776.5M1134.5 760.5L1134.5 775.5M665.5 208.5L665.5 230.5M724.5 208.5L724.5 230.5M783.5 208.5L783.5 230.5M842.5 208.5L842.5 230.5M960.5 208.5L960.5 230.5M1019.5 208.5L1019.5 230.5"/>
</g>
<g fill="none" stroke="#111" stroke-width="1.05">
<path d="M599.3 180.5C600.4 182.5 603.7 188.4 606.0 192.4C608.3 196.4 611.3 201.3 613.2 204.6C615.1 207.9 615.7 208.8 617.6 212.4C619.5 216.0 622.3 221.7 624.8 226.2C627.3 230.7 629.8 234.0 632.4 239.4C635.0 244.8 636.5 249.4 640.7 258.8C644.9 268.2 652.0 285.0 657.6 296.0C663.2 307.0 668.4 315.5 674.4 324.6C680.4 333.7 687.8 342.3 693.9 350.5C700.0 358.7 705.6 367.2 710.8 373.6C716.0 380.0 720.8 384.7 725.1 388.8C729.5 392.9 732.7 396.0 736.9 398.1C741.1 400.2 745.6 401.2 750.4 401.5C755.2 401.8 758.5 402.2 765.6 399.8C772.7 397.4 783.3 391.5 792.7 387.1C802.1 382.7 813.8 377.8 822.2 373.6C830.6 369.4 836.7 365.3 843.3 361.8C849.9 358.3 856.9 354.6 862.0 352.5C867.1 350.4 870.6 349.6 873.8 348.9C877.0 348.2 878.2 348.3 881.0 348.3C883.8 348.3 886.3 348.2 890.7 349.1C895.1 350.0 902.0 351.1 907.6 353.4C913.2 355.6 917.9 359.2 924.4 362.6C930.9 366.0 939.9 370.7 946.4 373.6C952.9 376.5 957.9 378.6 963.3 380.0C968.6 381.4 974.3 382.1 978.5 382.0C982.7 381.9 984.7 380.9 988.6 379.5C992.5 378.1 997.6 376.6 1002.1 373.6C1006.6 370.7 1011.7 365.7 1015.6 361.8C1019.5 357.9 1022.7 353.9 1025.8 350.5C1028.9 347.1 1031.4 345.8 1034.2 341.5C1037.0 337.2 1040.6 330.5 1042.7 324.6C1044.8 318.7 1046.4 314.1 1046.9 306.0C1047.4 297.9 1046.1 285.0 1045.8 275.7C1045.5 266.4 1045.0 256.1 1044.9 250.0C1044.9 243.9 1045.0 243.4 1045.5 239.4C1046.0 235.4 1046.9 230.7 1048.0 226.2C1049.1 221.7 1050.9 216.0 1052.2 212.4C1053.5 208.8 1054.2 207.9 1055.6 204.6C1057.0 201.3 1059.0 196.4 1060.7 192.4C1062.4 188.4 1064.9 182.5 1065.7 180.5"/>
<path d="M185.5 230.5L207.5 230.5M207.5 230.5L347.5 287.5M188.5 313.5L206.5 313.5M206.5 313.5L274.5 422.5M570.5 478.5L591.5 478.5M570.5 478.5L498.5 582.5M614.5 478.5L635.5 478.5M635.5 478.5L655.5 592.5M1008.5 477.5L1027.5 477.5M1027.5 477.5L1070.5 562.5M1418.5 103.5L1438.5 103.5M1418.5 103.5L1360.5 180.5M755.5 101.5L776.5 101.5M755.5 101.5L709.5 208.5M807.5 101.5L828.5 101.5M807.5 101.5L754.5 219.5M852.5 101.5L872.5 101.5M852.5 101.5L809.5 233.5M1531.5 419.5L1558.5 419.5M1531.5 419.5L1503.5 546.5"/>
<path d="M1304.5 800.5L1304.5 1037.5M1521.5 800.5L1521.5 1037.5M1537.5 800.5L1537.5 1037.5M1273.5 860.5L1637.5 860.5M1273.5 879.5L1637.5 879.5M1273.5 899.5L1637.5 899.5M1273.5 919.5L1637.5 919.5M1273.5 938.5L1637.5 938.5M1273.5 958.5L1637.5 958.5M1273.5 978.5L1637.5 978.5M1273.5 997.5L1637.5 997.5M1273.5 1017.5L1637.5 1017.5M1282.5 1062.5L1410.5 1062.5M1282.5 1072.5L1410.5 1072.5M1282.5 1082.5L1410.5 1082.5M1282.5 1111.5L1410.5 1111.5M1282.5 1121.5L1410.5 1121.5M1282.5 1131.5L1410.5 1131.5M1282.5 1141.5L1410.5 1141.5M1282.5 1151.5L1410.5 1151.5M1558.5 1092.5L1558.5 1121.5M1568.5 1092.5L1568.5 1121.5"/>
<path d="M204.5 510.5L204.5 711.5M230.5 510.5L230.5 711.5M249.5 484.5L380.5 711.5M240.5 517.5L354.5 711.5" stroke-width="1.3" stroke-dasharray="4.6 2.2"/>
</g>
<g fill="#0b1838"><circle cx="443.1" cy="200.0" r="1.9"/><circle cx="490.6" cy="202.0" r="1.9"/><circle cx="443.1" cy="254.5" r="1.9"/><circle cx="490.6" cy="255.0" r="1.9"/><circle cx="443.1" cy="301.0" r="1.9"/><circle cx="490.6" cy="299.0" r="1.9"/><circle cx="443.1" cy="524.4" r="1.9"/><circle cx="490.6" cy="522.4" r="1.9"/><circle cx="443.1" cy="469.9" r="1.9"/><circle cx="490.6" cy="469.4" r="1.9"/><circle cx="443.1" cy="423.4" r="1.9"/><circle cx="490.6" cy="425.4" r="1.9"/><circle cx="440.5" cy="361.8" r="1.9"/><circle cx="488.0" cy="361.8" r="1.9"/><circle cx="1121.7" cy="200.0" r="1.9"/><circle cx="1169.2" cy="202.0" r="1.9"/><circle cx="1121.7" cy="254.5" r="1.9"/><circle cx="1169.2" cy="255.0" r="1.9"/><circle cx="1121.7" cy="301.0" r="1.9"/><circle cx="1169.2" cy="299.0" r="1.9"/><circle cx="1121.7" cy="524.4" r="1.9"/><circle cx="1169.2" cy="522.4" r="1.9"/><circle cx="1121.7" cy="469.9" r="1.9"/><circle cx="1169.2" cy="469.4" r="1.9"/><circle cx="1121.7" cy="423.4" r="1.9"/><circle cx="1169.2" cy="425.4" r="1.9"/><circle cx="1119.1" cy="361.8" r="1.9"/><circle cx="1166.6" cy="361.8" r="1.9"/><circle cx="211.6" cy="457.4" r="2.1"/><circle cx="227.6" cy="457.4" r="2.1"/><circle cx="431.4" cy="666.7" r="2.2"/><circle cx="501.4" cy="666.7" r="2.2"/><circle cx="1347.7" cy="450.8" r="2.3"/><circle cx="1360.0" cy="450.8" r="2.3"/></g>
<g fill="#111"><circle cx="347.3" cy="287.8" r="1.3"/><circle cx="274.2" cy="422.5" r="1.3"/><circle cx="498.2" cy="582.7" r="1.3"/><circle cx="655.4" cy="592.2" r="1.3"/><circle cx="1070.4" cy="562.8" r="1.3"/><circle cx="1360.0" cy="180.6" r="1.3"/><circle cx="709.2" cy="208.2" r="1.3"/><circle cx="754.5" cy="219.5" r="1.3"/><circle cx="809.2" cy="233.8" r="1.3"/><circle cx="1503.4" cy="546.0" r="1.3"/></g>
<g fill="none" stroke="#2a2a2a" stroke-linecap="round" stroke-linejoin="round"><path d="M192.03 218.81Q192.70 216.30 195.32 216.30Q198.06 216.30 197.38 218.81Q196.83 220.86 194.00 222.91L189.30 227.70L195.00 227.70" stroke-width="1.05"/><path d="M194.10 302.72L198.21 299.30L195.15 310.70" stroke-width="1.05"/><path d="M577.83 464.30L583.07 464.30L579.11 468.86Q582.08 468.86 581.16 472.28Q580.24 475.70 577.39 475.70Q575.00 475.70 575.16 473.42" stroke-width="1.05"/><path d="M624.81 464.30L618.80 472.28L624.50 472.28M624.11 468.63L622.22 475.70" stroke-width="1.05"/><path d="M1020.17 463.40L1015.61 463.40L1013.87 468.19Q1015.34 467.39 1016.71 467.39Q1019.33 467.39 1018.32 471.15Q1017.34 474.80 1014.38 474.80Q1012.10 474.80 1012.19 472.75" stroke-width="1.05"/><path d="M1431.89 89.68Q1431.39 89.00 1430.02 89.00Q1427.06 89.00 1425.99 92.99L1424.92 96.98Q1424.00 100.40 1426.74 100.40Q1429.47 100.40 1430.39 96.98Q1431.24 93.79 1428.51 93.79Q1426.46 93.79 1425.28 95.61" stroke-width="1.05"/><path d="M763.93 87.20L769.63 87.20L762.70 98.60" stroke-width="1.05"/><path d="M817.43 92.33Q815.04 92.33 815.74 89.71Q816.41 87.20 818.81 87.20Q821.20 87.20 820.53 89.71Q819.82 92.33 817.43 92.33Q814.58 92.33 813.72 95.52Q812.90 98.60 815.75 98.60Q818.60 98.60 819.42 95.52Q820.28 92.33 817.43 92.33" stroke-width="1.05"/><path d="M859.20 97.92Q859.70 98.60 861.07 98.60Q864.03 98.60 865.10 94.61L866.17 90.62Q867.09 87.20 864.35 87.20Q861.62 87.20 860.70 90.62Q859.84 93.81 862.58 93.81Q864.63 93.81 865.80 91.99" stroke-width="1.05"/><path d="M1537.80 408.42L1541.91 405.00L1538.85 416.40M1548.98 405.00Q1546.24 405.00 1545.32 408.42L1544.10 412.98Q1543.19 416.40 1545.92 416.40Q1548.66 416.40 1549.57 412.98L1550.80 408.42Q1551.71 405.00 1548.98 405.00Z" stroke-width="1.05"/><path d="M1285.60 847.95L1288.66 845.40L1286.39 853.90" stroke-width="0.90"/><path d="M1526.30 847.95L1529.36 845.40L1527.09 853.90" stroke-width="0.90"/><path d="M1287.63 866.95Q1288.13 865.08 1290.09 865.08Q1292.13 865.08 1291.63 866.95Q1291.22 868.48 1289.11 870.01L1285.60 873.58L1289.85 873.58" stroke-width="0.90"/><path d="M1528.33 866.95Q1528.83 865.08 1530.79 865.08Q1532.83 865.08 1532.33 866.95Q1531.92 868.48 1529.81 870.01L1526.30 873.58L1530.55 873.58" stroke-width="0.90"/><path d="M1287.71 884.76L1291.62 884.76L1288.67 888.16Q1290.88 888.16 1290.19 890.71Q1289.51 893.26 1287.38 893.26Q1285.60 893.26 1285.72 891.56" stroke-width="0.90"/><path d="M1526.30 887.31L1529.36 884.76L1527.09 893.26" stroke-width="0.90"/><path d="M1290.08 904.44L1285.60 910.39L1289.85 910.39M1289.56 907.67L1288.15 912.94" stroke-width="0.90"/><path d="M1526.30 906.99L1529.36 904.44L1527.09 912.94" stroke-width="0.90"/><path d="M1291.62 924.12L1288.22 924.12L1286.92 927.69Q1288.02 927.10 1289.04 927.10Q1290.99 927.10 1290.24 929.90Q1289.51 932.62 1287.30 932.62Q1285.60 932.62 1285.67 931.09" stroke-width="0.90"/><path d="M1526.30 926.67L1529.36 924.12L1527.09 932.62" stroke-width="0.90"/><path d="M1291.48 944.31Q1291.11 943.80 1290.09 943.80Q1287.88 943.80 1287.08 946.77L1286.28 949.75Q1285.60 952.30 1287.64 952.30Q1289.68 952.30 1290.36 949.75Q1291.00 947.37 1288.96 947.37Q1287.43 947.37 1286.56 948.73" stroke-width="0.90"/><path d="M1526.30 946.35L1529.36 943.80L1527.09 952.30" stroke-width="0.90"/><path d="M1286.52 963.48L1290.77 963.48L1285.60 971.98" stroke-width="0.90"/><path d="M1528.41 963.48L1532.32 963.48L1529.37 966.88Q1531.58 966.88 1530.89 969.43Q1530.21 971.98 1528.09 971.98Q1526.30 971.98 1526.42 970.28" stroke-width="0.90"/><path d="M1288.98 986.99Q1287.19 986.99 1287.72 985.03Q1288.22 983.16 1290.00 983.16Q1291.79 983.16 1291.29 985.03Q1290.76 986.99 1288.98 986.99Q1286.85 986.99 1286.22 989.37Q1285.60 991.66 1287.72 991.66Q1289.85 991.66 1290.47 989.37Q1291.10 986.99 1288.98 986.99" stroke-width="0.90"/><path d="M1526.30 985.71L1529.36 983.16L1527.09 991.66" stroke-width="0.90"/><path d="M1285.60 1010.83Q1285.97 1011.34 1286.99 1011.34Q1289.20 1011.34 1290.00 1008.36L1290.80 1005.39Q1291.48 1002.84 1289.44 1002.84Q1287.40 1002.84 1286.72 1005.39Q1286.08 1007.77 1288.12 1007.77Q1289.65 1007.77 1290.52 1006.41" stroke-width="0.90"/><path d="M1528.41 1002.84L1532.32 1002.84L1529.37 1006.24Q1531.58 1006.24 1530.89 1008.79Q1530.21 1011.34 1528.09 1011.34Q1526.30 1011.34 1526.42 1009.64" stroke-width="0.90"/><path d="M1283.20 1025.07L1286.26 1022.52L1283.99 1031.02M1291.53 1022.52Q1289.49 1022.52 1288.81 1025.07L1287.90 1028.47Q1287.22 1031.02 1289.26 1031.02Q1291.30 1031.02 1291.98 1028.47L1292.89 1025.07Q1293.57 1022.52 1291.53 1022.52Z" stroke-width="0.90"/><path d="M1526.30 1025.07L1529.36 1022.52L1527.09 1031.02" stroke-width="0.90"/></g>
<g font-family="'Liberation Sans', sans-serif" font-style="italic" fill="#1c1c1c" opacity="0.99" text-rendering="geometricPrecision"><text x="1280.4" y="818.5" font-size="11.5" textLength="16.8" lengthAdjust="spacingAndGlyphs" stroke="#fff" stroke-width="0.18">Поз.</text><text x="1273.9" y="831.0" font-size="9.0" textLength="29.3" lengthAdjust="spacingAndGlyphs">обознач.</text><text x="1379.3" y="825.4" font-size="12.0" textLength="64.3" lengthAdjust="spacingAndGlyphs" stroke="#fff" stroke-width="0.18">Наименование</text><text x="1522.8" y="825.4" font-size="10.0" textLength="12.8" lengthAdjust="spacingAndGlyphs">Кол.</text><text x="1558.4" y="825.4" font-size="12.0" textLength="54.5" lengthAdjust="spacingAndGlyphs" stroke="#fff" stroke-width="0.18">Примечания</text><text x="1305.8" y="854.4" font-size="12.0" textLength="84.0" lengthAdjust="spacingAndGlyphs" stroke="#fff" stroke-width="0.18">Воронка выходная</text><text x="1305.8" y="874.1" font-size="12.0" textLength="152.4" lengthAdjust="spacingAndGlyphs" stroke="#fff" stroke-width="0.18">Барабан наружный вращающийся</text><text x="1305.8" y="893.8" font-size="12.0" textLength="57.1" lengthAdjust="spacingAndGlyphs" stroke="#fff" stroke-width="0.18">Опора левая</text><text x="1305.8" y="913.4" font-size="12.0" textLength="130.1" lengthAdjust="spacingAndGlyphs" stroke="#fff" stroke-width="0.18">Привод наружного барабана</text><text x="1305.8" y="933.1" font-size="12.0" textLength="62.4" lengthAdjust="spacingAndGlyphs" stroke="#fff" stroke-width="0.18">Опора правая</text><text x="1305.8" y="952.8" font-size="12.0" textLength="84.0" lengthAdjust="spacingAndGlyphs" stroke="#fff" stroke-width="0.18">Воронка засыпная</text><text x="1305.8" y="972.5" font-size="12.0" textLength="18.7" lengthAdjust="spacingAndGlyphs" stroke="#fff" stroke-width="0.18">Нож</text><text x="1305.8" y="992.2" font-size="12.0" textLength="180.5" lengthAdjust="spacingAndGlyphs" stroke="#fff" stroke-width="0.18">Барабан внутренний перфорированный</text><text x="1305.8" y="1011.8" font-size="12.0" textLength="73.2" lengthAdjust="spacingAndGlyphs" stroke="#fff" stroke-width="0.18">Выталкиватель</text><text x="1305.8" y="1031.5" font-size="12.0" textLength="114.5" lengthAdjust="spacingAndGlyphs" stroke="#fff" stroke-width="0.18">Привод выталкивателей</text><text x="1283.0" y="1099.6" font-size="7.5" textLength="12.0" lengthAdjust="spacingAndGlyphs">Изм.</text><text x="1297.5" y="1099.6" font-size="7.5" textLength="16.5" lengthAdjust="spacingAndGlyphs">Лист</text><text x="1324.3" y="1099.6" font-size="7.5" textLength="28.0" lengthAdjust="spacingAndGlyphs">№ докум.</text><text x="1367.8" y="1099.6" font-size="7.5" textLength="16.2" lengthAdjust="spacingAndGlyphs">Подп.</text><text x="1392.2" y="1099.6" font-size="7.5" textLength="15.8" lengthAdjust="spacingAndGlyphs">Дата</text><text x="1283.5" y="1109.0" font-size="7.5" textLength="23.9" lengthAdjust="spacingAndGlyphs">Разраб.</text><text x="1283.5" y="1118.6" font-size="7.5" textLength="17.0" lengthAdjust="spacingAndGlyphs">Пров.</text><text x="1283.5" y="1128.9" font-size="7.5" textLength="26.0" lengthAdjust="spacingAndGlyphs">Т.контр.</text><text x="1283.5" y="1148.9" font-size="7.5" textLength="26.0" lengthAdjust="spacingAndGlyphs">Н.контр.</text><text x="1283.5" y="1158.4" font-size="7.5" textLength="13.0" lengthAdjust="spacingAndGlyphs">Утв.</text><text x="1422.6" y="1112.3" font-size="12.5" textLength="111.4" lengthAdjust="spacingAndGlyphs" stroke="#fff" stroke-width="0.18">Барабанный гранулятор</text><text x="1556.0" y="1090.3" font-size="7.5" textLength="14.0" lengthAdjust="spacingAndGlyphs">Лит.</text><text x="1583.1" y="1090.3" font-size="7.5" textLength="19.7" lengthAdjust="spacingAndGlyphs">Масса</text><text x="1612.8" y="1090.3" font-size="7.5" textLength="30.9" lengthAdjust="spacingAndGlyphs">Масштаб</text><text x="1550.8" y="1128.9" font-size="7.5" textLength="17.6" lengthAdjust="spacingAndGlyphs">Лист</text><text x="1593.4" y="1128.9" font-size="7.5" textLength="24.6" lengthAdjust="spacingAndGlyphs">Листов</text><text x="1634.0" y="1128.9" font-size="7.5" textLength="3.0" lengthAdjust="spacingAndGlyphs">1</text><text x="1431.0" y="1168.2" font-size="7.5" textLength="33.7" lengthAdjust="spacingAndGlyphs">Копировал</text><text x="1570.0" y="1168.2" font-size="7.5" textLength="25.3" lengthAdjust="spacingAndGlyphs">Формат</text><text x="1609.3" y="1168.2" font-size="7.5" textLength="7.1" lengthAdjust="spacingAndGlyphs">А1</text><text x="25.3" y="676.0" font-size="7.5" textLength="43.6" lengthAdjust="spacingAndGlyphs" transform="rotate(-90 25.3 676.0)">Перв. примен.</text><text x="25.3" y="787.2" font-size="7.5" textLength="28.2" lengthAdjust="spacingAndGlyphs" transform="rotate(-90 25.3 787.2)">Справ. №</text><text x="25.3" y="931.9" font-size="7.5" textLength="42.6" lengthAdjust="spacingAndGlyphs" transform="rotate(-90 25.3 931.9)">Подп. и дата</text><text x="25.3" y="989.2" font-size="7.5" textLength="40.0" lengthAdjust="spacingAndGlyphs" transform="rotate(-90 25.3 989.2)">Инв. № дубл.</text><text x="25.3" y="1038.4" font-size="7.5" textLength="41.3" lengthAdjust="spacingAndGlyphs" transform="rotate(-90 25.3 1038.4)">Взам. инв. №</text><text x="25.3" y="1098.3" font-size="7.5" textLength="41.3" lengthAdjust="spacingAndGlyphs" transform="rotate(-90 25.3 1098.3)">Подп. и дата</text><text x="25.3" y="1156.9" font-size="7.5" textLength="41.2" lengthAdjust="spacingAndGlyphs" transform="rotate(-90 25.3 1156.9)">Инв. № подл.</text></g>
</svg>
</body></html>
